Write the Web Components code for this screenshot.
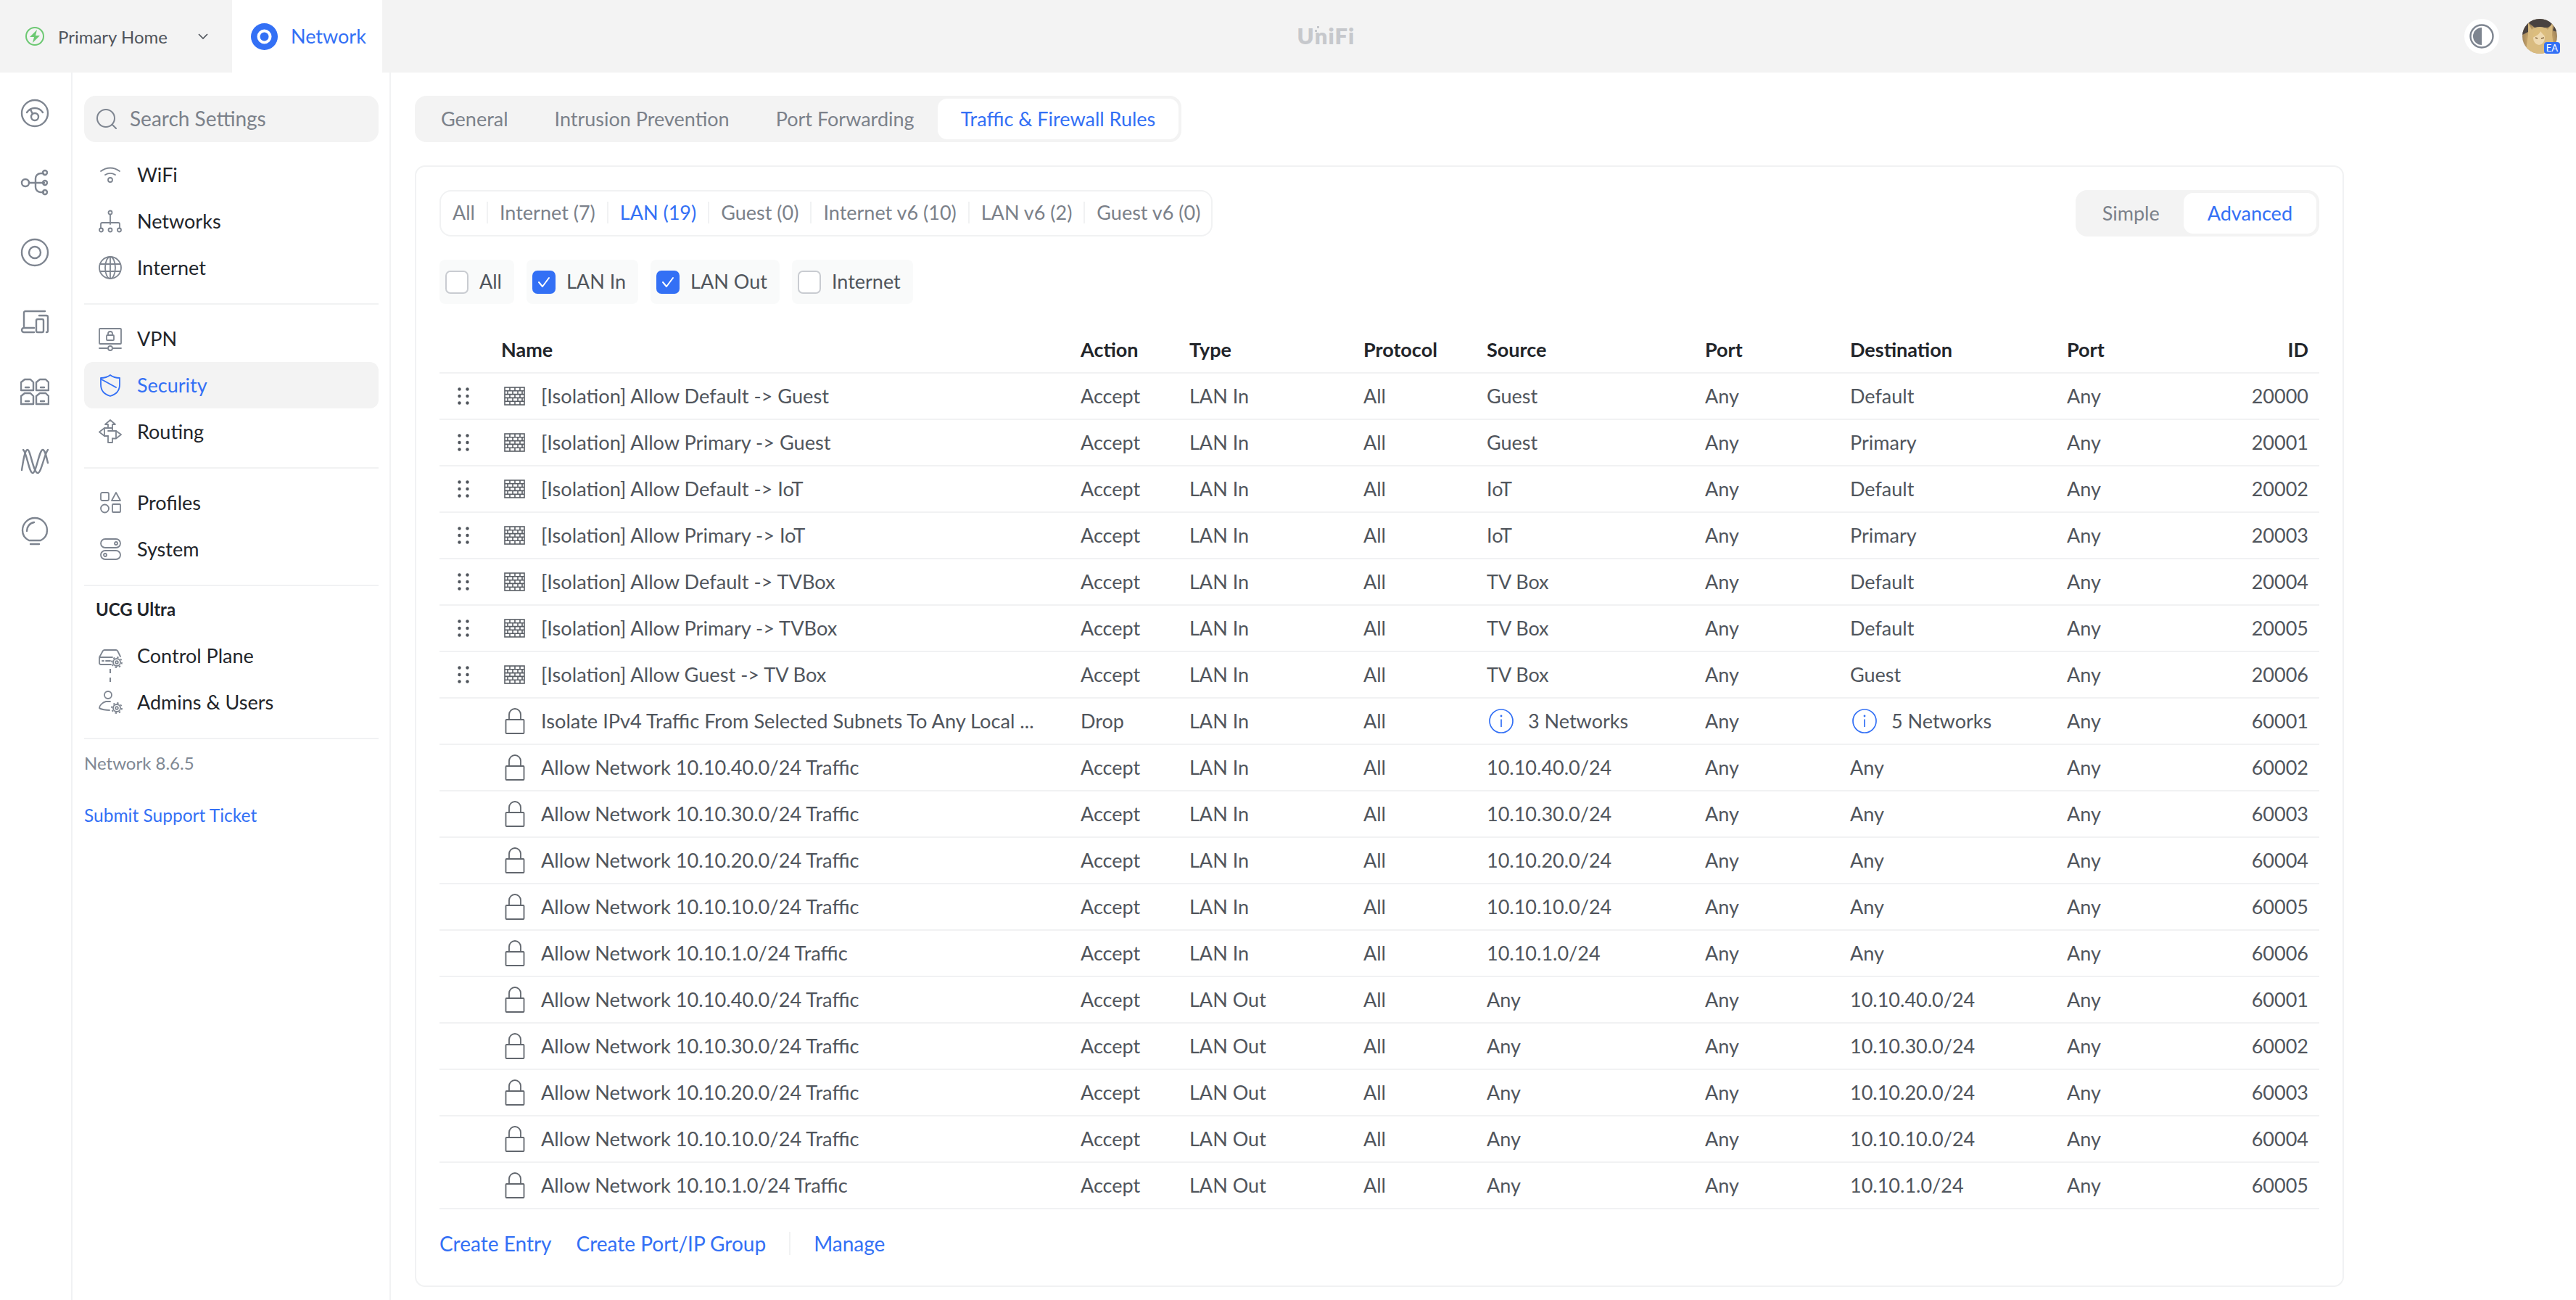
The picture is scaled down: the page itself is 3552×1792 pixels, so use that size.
<!DOCTYPE html>
<html>
<head>
<meta charset="utf-8">
<title>UniFi Network</title>
<style>
    html, body { margin: 0; padding: 0; height: 100%; background: #fff; overflow: hidden; }
    body { font-family: "Lato", "Liberation Sans", sans-serif; font-size: 27px; color: #50555c; }
</style>
</head>
<body>
<unifi-app></unifi-app>
<script>
const BLUE = '#3370f5';
const svg = (w, h, body, stroke = 'currentColor', sw = 2) =>
    `<svg width="${w}" height="${h}" viewBox="0 0 ${w} ${h}" fill="none" stroke="${stroke}" stroke-width="${sw}" stroke-linecap="round" stroke-linejoin="round">${body}</svg>`;

// rail icons, 40 box
const RAIL = {
    dash: '<circle cx="20" cy="20" r="18"/><path d="M9 19a13 13 0 0 1 22 0"/><circle cx="20" cy="25" r="5"/><path d="M14 15l3 6"/>',
    topo: '<circle cx="7" cy="20" r="5"/><path d="M12 20h21"/><path d="M32 7h-4a7 7 0 0 0-7 7v12a7 7 0 0 0 7 7h4"/><circle cx="34" cy="6" r="3"/><circle cx="34" cy="20" r="3"/><circle cx="34" cy="33" r="3"/>',
    net: '<circle cx="20" cy="20" r="18"/><circle cx="20" cy="20" r="8"/>',
    devices: '<path d="M5 26V7a2 2 0 0 1 2-2h27"/><path d="M2 31a3 3 0 0 1 3-3h14M2 31a3 3 0 0 0 3 3h14"/><rect x="22" y="16" width="10" height="18" rx="2"/><path d="M26 11h10a2 2 0 0 1 2 2v19a2 2 0 0 1-2 2"/>',
    ports: '<path d="M1 18V7l5-4h8l4 4v11zM22 18V7l5-4h8l4 4v11zM1 37V26l5-4h8l4 4v11zM22 37V26l5-4h8l4 4v11z"/><path d="M7 14h5M28 14h5M7 33h5M28 33h5" />',
    wave: '<path d="M4 4C9 8 12 36 17 36S26 4 31 4c3 0 5 10 7 18"/><path d="M2 32C4 20 6 4 10 4c4 0 8 32 14 32 5 0 9-26 14-32"/>',
    bulb: '<path d="M12 33c-6-3-9-8-9-14a17 17 0 0 1 34 0c0 6-3 11-9 14z"/><path d="M9 20c0-6 4-11 10-12"/><path d="M14 38h12"/>'
};
// gear used by the two UCG entries
const gear = (x, y) => `<circle cx="${x}" cy="${y}" r="5"/><circle cx="${x}" cy="${y}" r="7" stroke-dasharray="2.4 3.1" stroke-linecap="butt"/><circle cx="${x}" cy="${y}" r="1.8"/>`;
// settings icons, 32 box
const NAV = {
    wifi: '<path d="M3 11c8-6 18-6 26 0M9 16c5-3 9-3 14 0"/><circle cx="16" cy="23" r="3"/>',
    networks: '<circle cx="16" cy="4" r="2.5"/><path d="M16 7v13M3 26v-6a2 2 0 0 1 2-2h22a2 2 0 0 1 2 2v6"/><circle cx="3.5" cy="28" r="2.5"/><circle cx="16" cy="28" r="2.5"/><circle cx="28.5" cy="28" r="2.5"/>',
    globe: '<circle cx="16" cy="16" r="15"/><ellipse cx="16" cy="16" rx="7" ry="15"/><path d="M16 1v30M2 11h28M2 21h28"/>',
    vpn: '<rect x="1" y="2" width="30" height="21" rx="1"/><rect x="11" y="11" width="10" height="7" rx="1"/><path d="M13 11V9a3 3 0 0 1 6 0v2M1 29h11M20 29h11"/><circle cx="16" cy="29" r="3"/>',
    shield: '<path d="M3 6c5 0 9-1 13-4 4 3 8 4 13 4v9c0 9-6 14-13 16C9 29 3 24 3 15z"/><path d="M4 8l20 11"/>',
    routing: '<path d="M13 11V6H9l7-6 7 6h-4v5"/><path d="M19 11H8l-7 5.5L8 22h5"/><path d="M13 15h11l7 5-7 5.5h-5"/><path d="M13 22v9h6v-5.5"/><path d="M19 11v4M8 11v11M24 15v10"/>',
    profiles: '<rect x="3" y="2" width="11" height="11" rx="2"/><path d="M24 2l6 11H18z"/><circle cx="8.5" cy="24" r="5.5"/><rect x="19" y="18" width="11" height="11" rx="1"/>',
    system: '<rect x="3" y="2" width="27" height="12" rx="6"/><rect x="3" y="18" width="27" height="12" rx="6"/><circle cx="24" cy="8" r="2"/><circle cx="9" cy="24" r="2"/>',
    plane: '<path d="M1 18l5-9a3 3 0 0 1 2-1h16a3 3 0 0 1 2 1l4 8"/><path d="M17 28H3a2 2 0 0 1-2-2v-6a2 2 0 0 1 2-2h16"/><path d="M5 23h2M10 23h6"/>' + gear(25, 25),
    admins: '<circle cx="13" cy="6" r="5"/><path d="M16 15h-6C5 16 1 21 1 24c2 2 10 3 14 3"/>' + gear(25, 24)
};
const WALL = `<svg width="29" height="26" viewBox="0 0 29 26" fill="none" stroke="#5a5f66" stroke-width="1.6"><rect x="1" y="1" width="27" height="24"/><path d="M1 5.8h27M1 10.6h27M1 15.4h27M1 20.2h27M8 1v4.8M15 1v4.8M22 1v4.8M5 5.8v4.8M12 5.8v4.8M19 5.8v4.8M25 5.8v4.8M8 10.6v4.8M15 10.6v4.8M22 10.6v4.8M5 15.4v4.8M12 15.4v4.8M19 15.4v4.8M25 15.4v4.8M8 20.2v4.8M15 20.2v4.8M22 20.2v4.8"/></svg>`;
const LOCK = `<svg width="28" height="36" viewBox="0 0 28 36" fill="none" stroke="#62676e" stroke-width="1.8"><rect x="1.5" y="16" width="25" height="19" rx="1"/><path d="M6 16V9a8 8 0 0 1 16 0v7"/></svg>`;
const DRAG = `<svg width="16" height="24" viewBox="0 0 16 24" fill="#50555c"><circle cx="2.5" cy="2.5" r="2.2"/><circle cx="13.5" cy="2.5" r="2.2"/><circle cx="2.5" cy="12" r="2.2"/><circle cx="13.5" cy="12" r="2.2"/><circle cx="2.5" cy="21.5" r="2.2"/><circle cx="13.5" cy="21.5" r="2.2"/></svg>`;
const INFO = `<svg width="34" height="34" viewBox="0 0 34 34" fill="none" stroke="${BLUE}" stroke-width="1.7"><circle cx="17" cy="17" r="16"/><path d="M17 14.5v10.5"/><circle cx="17" cy="10" r="1.4" fill="${BLUE}" stroke="none"/></svg>`;

class TopBar extends HTMLElement {
    constructor() {
        super();
        this.shadowObj = this.attachShadow({ mode: 'open' });
        this.shadowObj.innerHTML = `
        <style>
            :host { display: flex; align-items: center; height: 100px; background: #f3f3f3; position: relative; }
            .site { display: flex; align-items: center; width: 320px; box-sizing: border-box; padding-left: 34px; font-size: 24px; color: #50555c; }
            .site .name { margin-left: 18px; width: 192px; }
            .app { display: flex; align-items: center; width: 207px; height: 100px; background: #fff; box-sizing: border-box; padding-left: 26px; color: ${BLUE}; font-size: 27px; }
            .app span { margin-left: 18px; margin-top: -2px; }
            .logo { flex: 1; display: flex; justify-content: center; margin-top: -2px; font: 800 31px "Lato", sans-serif; color: #c6c8cc; letter-spacing: 1px; padding-right: 268px; }
            .logo b { position: relative; font-weight: 800; }
            .logo i { position: absolute; width: 3px; height: 3px; background: #c6c8cc; left: 27px; }
            .theme { width: 48px; height: 48px; border-radius: 50%; background: #fff; display: flex; align-items: center; justify-content: center; }
            .avatar { position: relative; width: 48px; height: 48px; margin: 0 26px 0 32px; }
            .avatar span { position: absolute; right: -4px; bottom: 0; width: 22px; height: 16px; text-align: center; font: 13px/16px "Lato", sans-serif; background: ${BLUE}; color: #fff; border-radius: 4px; }
            svg { display: block; }
        </style>
        <div class="site">
            <svg width="28" height="28" viewBox="0 0 28 28" fill="none"><circle cx="14" cy="14" r="12" stroke="#6cc872" stroke-width="2"/><path d="M17 5l-10 10h6l-2 8 10-10h-6z" fill="#6cc872"/></svg>
            <div class="name">Primary Home</div>
            <svg width="16" height="10" viewBox="0 0 16 10" fill="none" stroke="#50555c" stroke-width="1.6"><path d="M2 2l6 6 6-6"/></svg>
        </div>
        <div class="app">
            <svg width="37" height="37" viewBox="0 0 37 37"><circle cx="18.5" cy="18.5" r="18.5" fill="${BLUE}"/><circle cx="18.5" cy="18.5" r="8" fill="none" stroke="#fff" stroke-width="4"/></svg>
            <span>Network</span>
        </div>
        <div class="logo"><b>U<i style="top:6px"></i><i style="top:11px;left:24px"></i></b>niFi</div>
        <div class="theme">
            <svg width="34" height="34" viewBox="0 0 34 34"><circle cx="17" cy="17" r="15.5" fill="none" stroke="#7e8590" stroke-width="2.4"/><path d="M17 5a12 12 0 0 0 0 24z" fill="#7e8590"/></svg>
        </div>
        <div class="avatar">
            <svg width="48" height="48" viewBox="0 0 48 48">
                <defs><clipPath id="c"><circle cx="24" cy="24" r="24"/></clipPath>
                <radialGradient id="g" cx=".5" cy=".6" r=".6"><stop offset="0" stop-color="#e6cb94"/><stop offset=".6" stop-color="#c4a268"/><stop offset="1" stop-color="#8a7355"/></radialGradient>
                <filter id="bl"><feGaussianBlur stdDeviation=".7"/></filter></defs>
                <g clip-path="url(#c)">
                    <rect width="48" height="48" fill="url(#g)"/>
                    <g filter="url(#bl)">
                    <path d="M0 0h48v18l-6-2 4-11-11 7H17L8 5l4 11-12 6z" fill="#4a4240"/>
                    <path d="M8 5l5 10c3-3 6-4 11-4s8 1 11 4l7-10-1 18 4 25H4l4-25z" fill="#d9bb80"/>
                    <ellipse cx="23" cy="26" rx="8" ry="10" fill="#efdab2"/>
                    <path d="M14 26c0-8 4-13 10-13s10 5 9 12c-3-2-6-5-8-8-1 4-6 7-11 9z" fill="#dcbd7e"/>
                    <path d="M18 26l3 1M26 27l4-1" stroke="#86663f" stroke-width="1.4"/>
                    </g>
                </g>
            </svg>
            <span>EA</span>
        </div>`;
    }
}

class IconRail extends HTMLElement {
    constructor() {
        super();
        this.shadowObj = this.attachShadow({ mode: 'open' });
        const icons = ['dash', 'topo', 'net', 'devices', 'ports', 'wave', 'bulb'];
        this.shadowObj.innerHTML = `
        <style>
            :host { display: flex; flex-direction: column; align-items: center; box-sizing: border-box; width: 100px; padding: 8px 2px 0 0; border-right: 2px solid #f1f2f3; color: #7e8590; }
            div { height: 96px; display: flex; align-items: center; justify-content: center; }
            svg { display: block; }
        </style>
        ${icons.map(n => `<div>${svg(40, 40, RAIL[n], 'currentColor', 2.4)}</div>`).join('')}`;
    }
}

class NavItem extends HTMLElement {
    constructor() {
        super();
        this.shadowObj = this.attachShadow({ mode: 'open' });
    }
    connectedCallback() {
        const active = this.hasAttribute('active');
        this.shadowObj.innerHTML = `
        <style>
            :host { display: flex; align-items: center; height: 64px; box-sizing: border-box; padding-left: 20px; border-radius: 12px; color: ${active ? BLUE : '#22252a'}; background: ${active ? '#f3f3f3' : 'transparent'}; font-size: 27px; }
            .i { width: 32px; height: 32px; margin-right: 21px; color: ${active ? BLUE : '#7e8590'}; }
            svg { display: block; overflow: visible; }
            slot { display: block; margin-top: -2px; }
        </style>
        <div class="i">${svg(32, 32, NAV[this.getAttribute('icon')], 'currentColor', 1.8)}</div>
        <slot></slot>`;
    }
}

class SettingsNav extends HTMLElement {
    constructor() {
        super();
        this.shadowObj = this.attachShadow({ mode: 'open' });
        this.shadowObj.innerHTML = `
        <style>
            :host { display: block; box-sizing: border-box; width: 439px; padding: 32px 15px 0 16px; border-right: 2px solid #f1f2f3; }
            .search { display: flex; align-items: center; height: 64px; border-radius: 16px; background: #f3f3f3; padding-left: 17px; color: #7b818a; font-size: 28px; margin-bottom: 13px; }
            .search svg { margin-right: 18px; }
            .search span { margin-top: -2px; }
            hr { border: 0; height: 2px; background: #f1f2f3; margin: 17px 0 15px; }
            .title { font-weight: 700; font-size: 24px; color: #22252a; padding-left: 16px; height: 34px; line-height: 34px; margin-bottom: 15px; }
            .ver { font-size: 24px; color: #808893; margin-top: 18px; line-height: 30px; }
            .link { font-size: 24.5px; color: ${BLUE}; margin-top: 42px; line-height: 30px; }
            .pair { position: relative; }
            .pair i { position: absolute; left: 35px; top: 50px; height: 18px; border-left: 2px dashed #7e8590; }
        </style>
        <div class="search">
            <svg width="28" height="28" viewBox="0 0 28 28" fill="none" stroke="#7e8590" stroke-width="2"><circle cx="13" cy="13" r="12"/><path d="M22 22l5 5" stroke-linecap="round"/></svg>
            <span>Search Settings</span>
        </div>
        <nav-item icon="wifi">WiFi</nav-item>
        <nav-item icon="networks">Networks</nav-item>
        <nav-item icon="globe">Internet</nav-item>
        <hr>
        <nav-item icon="vpn">VPN</nav-item>
        <nav-item icon="shield" active>Security</nav-item>
        <nav-item icon="routing">Routing</nav-item>
        <hr>
        <nav-item icon="profiles">Profiles</nav-item>
        <nav-item icon="system">System</nav-item>
        <hr>
        <div class="title">UCG Ultra</div>
        <div class="pair">
            <nav-item icon="plane">Control Plane</nav-item>
            <i></i>
            <nav-item icon="admins">Admins &amp; Users</nav-item>
        </div>
        <hr>
        <div class="ver">Network 8.6.5</div>
        <div class="link">Submit Support Ticket</div>`;
    }
}

// segmented control, the light pill with one white tab
class SegTabs extends HTMLElement {
    constructor() {
        super();
        this.shadowObj = this.attachShadow({ mode: 'open' });
    }
    connectedCallback() {
        const items = this.getAttribute('items').split('|');
        const active = this.getAttribute('active');
        const pad = this.getAttribute('pad') || '32';
        this.shadowObj.innerHTML = `
        <style>
            :host { display: inline-flex; height: 64px; box-sizing: border-box; padding: 4px; background: #f3f3f3; border-radius: 16px; font-size: 27px; color: #7b818a; }
            div { display: flex; align-items: center; padding: 0 ${pad}px 2px; border-radius: 13px; white-space: nowrap; }
            .on { background: #fff; color: ${BLUE}; }
        </style>
        ${items.map(t => `<div class="${t === active ? 'on' : ''}">${t.replace('&', '&amp;')}</div>`).join('')}`;
    }
}

class FilterTabs extends HTMLElement {
    constructor() {
        super();
        this.shadowObj = this.attachShadow({ mode: 'open' });
        const items = ['All', 'Internet (7)', 'LAN (19)', 'Guest (0)', 'Internet v6 (10)', 'LAN v6 (2)', 'Guest v6 (0)'];
        this.shadowObj.innerHTML = `
        <style>
            :host { display: inline-flex; align-items: center; height: 64px; box-sizing: border-box; border: 2px solid #f1f2f3; border-radius: 16px; padding: 0 15px 2px 16px; font-size: 27px; color: #7b818a; }
            span { padding: 0 16px; border-left: 2px solid #f1f2f3; line-height: 30px; white-space: nowrap; }
            span:first-of-type { border-left: 0; padding-left: 0; }
            span:last-of-type { padding-right: 0; }
            .on { color: ${BLUE}; }
        </style>
        ${items.map(t => `<span class="${t === 'LAN (19)' ? 'on' : ''}">${t}</span>`).join('')}`;
    }
}

class CheckChip extends HTMLElement {
    constructor() {
        super();
        this.shadowObj = this.attachShadow({ mode: 'open' });
    }
    connectedCallback() {
        const on = this.hasAttribute('checked');
        this.shadowObj.innerHTML = `
        <style>
            :host { display: inline-flex; align-items: center; height: 61px; box-sizing: border-box; padding: 0 17px 0 8px; background: #f9fafa; border-radius: 8px; font-size: 27px; color: #50555c; }
            .b { width: 32px; height: 32px; box-sizing: border-box; border-radius: 7px; margin-right: 15px; display: flex; align-items: center; justify-content: center; background: ${on ? BLUE : '#fff'}; border: 2px solid ${on ? BLUE : '#c9ccd1'}; }
            slot { display: block; margin-top: -2px; }
        </style>
        <div class="b">${on ? '<svg width="20" height="20" viewBox="0 0 20 20" fill="none" stroke="#fff" stroke-width="2" stroke-linecap="round" stroke-linejoin="round"><path d="M3 10l5 6L17 4"/></svg>' : ''}</div>
        <slot></slot>`;
    }
}

const COLS = '85px 799px 150px 240px 170px 301px 200px 299px 1fr 140px';

const RULES = [
    ['[Isolation] Allow Default -> Guest', 'Accept', 'LAN In', 'Guest', 'Default', 20000],
    ['[Isolation] Allow Primary -> Guest', 'Accept', 'LAN In', 'Guest', 'Primary', 20001],
    ['[Isolation] Allow Default -> IoT', 'Accept', 'LAN In', 'IoT', 'Default', 20002],
    ['[Isolation] Allow Primary -> IoT', 'Accept', 'LAN In', 'IoT', 'Primary', 20003],
    ['[Isolation] Allow Default -> TVBox', 'Accept', 'LAN In', 'TV Box', 'Default', 20004],
    ['[Isolation] Allow Primary -> TVBox', 'Accept', 'LAN In', 'TV Box', 'Default', 20005],
    ['[Isolation] Allow Guest -> TV Box', 'Accept', 'LAN In', 'TV Box', 'Guest', 20006],
    ['Isolate IPv4 Traffic From Selected Subnets To Any Local ...', 'Drop', 'LAN In', '@3 Networks', '@5 Networks', 60001],
    ['Allow Network 10.10.40.0/24 Traffic', 'Accept', 'LAN In', '10.10.40.0/24', 'Any', 60002],
    ['Allow Network 10.10.30.0/24 Traffic', 'Accept', 'LAN In', '10.10.30.0/24', 'Any', 60003],
    ['Allow Network 10.10.20.0/24 Traffic', 'Accept', 'LAN In', '10.10.20.0/24', 'Any', 60004],
    ['Allow Network 10.10.10.0/24 Traffic', 'Accept', 'LAN In', '10.10.10.0/24', 'Any', 60005],
    ['Allow Network 10.10.1.0/24 Traffic', 'Accept', 'LAN In', '10.10.1.0/24', 'Any', 60006],
    ['Allow Network 10.10.40.0/24 Traffic', 'Accept', 'LAN Out', 'Any', '10.10.40.0/24', 60001],
    ['Allow Network 10.10.30.0/24 Traffic', 'Accept', 'LAN Out', 'Any', '10.10.30.0/24', 60002],
    ['Allow Network 10.10.20.0/24 Traffic', 'Accept', 'LAN Out', 'Any', '10.10.20.0/24', 60003],
    ['Allow Network 10.10.10.0/24 Traffic', 'Accept', 'LAN Out', 'Any', '10.10.10.0/24', 60004],
    ['Allow Network 10.10.1.0/24 Traffic', 'Accept', 'LAN Out', 'Any', '10.10.1.0/24', 60005]
];

class RulesTable extends HTMLElement {
    constructor() {
        super();
        this.shadowObj = this.attachShadow({ mode: 'open' });
        this.shadowObj.innerHTML = `
        <style>
            :host { display: block; font-size: 27px; color: #50555c; }
            .r { display: grid; grid-template-columns: ${COLS}; align-items: center; height: 64px; box-sizing: border-box; border-bottom: 2px solid #f1f2f3; white-space: nowrap; }
            .r > div { margin-top: -2px; }
            .r > .g { margin-top: 0; }
            .h { color: #22252a; font-weight: 700; }
            .id { text-align: right; padding-right: 15px; }
            .g { display: flex; align-items: center; height: 100%; }
            .drag { width: 16px; flex: none; margin-left: 25px; }
            .g > div { flex: none; }
            .r > .nm { margin-left: 55px; font-size: 27.2px; }
            .info { display: flex; align-items: center; }
            .info svg { margin: 2px 20px 0 3px; }
            svg { display: block; }
        </style>
        <div class="r h">
            <div></div><div>Name</div><div>Action</div><div>Type</div><div>Protocol</div><div>Source</div><div>Port</div><div>Destination</div><div>Port</div><div class="id">ID</div>
        </div>
        ${RULES.map(r => this._row(r)).join('')}`;
    }

    _cell(v) {
        if (v[0] === '@') return `<div class="info">${INFO}${v.slice(1)}</div>`;
        return `<div>${v}</div>`;
    }

    _row(r) {
        const name = r[0].replace(/>/g, '&gt;');
        const custom = r[0].startsWith('[');
        return `
        <div class="r">
            <div class="g">
                <div class="drag">${custom ? DRAG : ''}</div>
                <div style="margin-left:${custom ? 48 : 49}px">${custom ? WALL : LOCK}</div>
            </div>
            <div class="nm">${name}</div>
            <div>${r[1]}</div><div>${r[2]}</div><div>All</div>
            ${this._cell(r[3])}<div>Any</div>${this._cell(r[4])}<div>Any</div>
            <div class="id">${r[5]}</div>
        </div>`;
    }
}

class RulesCard extends HTMLElement {
    constructor() {
        super();
        this.shadowObj = this.attachShadow({ mode: 'open' });
        this.shadowObj.innerHTML = `
        <style>
            :host { display: block; box-sizing: border-box; height: 1546px; border: 2px solid #f1f2f3; border-radius: 14px; padding: 32px 32px 0 32px; }
            .top { display: flex; justify-content: space-between; align-items: flex-start; }
            .chips { display: flex; gap: 17px; margin: 32px 0; }
            .foot { display: flex; align-items: center; height: 94px; font-size: 28px; color: ${BLUE}; }
            .foot span + span { margin-left: 34px; }
            .foot .sep { height: 32px; border-left: 2px solid #f1f2f3; margin: 0 32px; }
            .foot .sep + span { margin-left: 0; }
        </style>
        <div class="top">
            <filter-tabs></filter-tabs>
            <seg-tabs items="Simple|Advanced" active="Advanced" pad="33"></seg-tabs>
        </div>
        <div class="chips">
            <check-chip>All</check-chip>
            <check-chip checked>LAN In</check-chip>
            <check-chip checked>LAN Out</check-chip>
            <check-chip>Internet</check-chip>
        </div>
        <rules-table></rules-table>
        <div class="foot">
            <span>Create Entry</span><span>Create Port/IP Group</span><div class="sep"></div><span>Manage</span>
        </div>`;
    }
}

class UnifiApp extends HTMLElement {
    constructor() {
        super();
        this.shadowObj = this.attachShadow({ mode: 'open' });
        this.shadowObj.innerHTML = `
        <style>
            :host { display: block; height: 1792px; overflow: hidden; }
            .body { display: flex; height: 1692px; }
            main { flex: 1; box-sizing: border-box; padding: 32px 320px 0 33px; }
            .tabs { height: 96px; }
        </style>
        <top-bar></top-bar>
        <div class="body">
            <icon-rail></icon-rail>
            <settings-nav></settings-nav>
            <main>
                <div class="tabs"><seg-tabs items="General|Intrusion Prevention|Port Forwarding|Traffic &amp; Firewall Rules" active="Traffic &amp; Firewall Rules"></seg-tabs></div>
                <rules-card></rules-card>
            </main>
        </div>`;
    }
}

customElements.define('top-bar', TopBar);
customElements.define('icon-rail', IconRail);
customElements.define('nav-item', NavItem);
customElements.define('settings-nav', SettingsNav);
customElements.define('seg-tabs', SegTabs);
customElements.define('filter-tabs', FilterTabs);
customElements.define('check-chip', CheckChip);
customElements.define('rules-table', RulesTable);
customElements.define('rules-card', RulesCard);
customElements.define('unifi-app', UnifiApp);
</script>
</body>
</html>
